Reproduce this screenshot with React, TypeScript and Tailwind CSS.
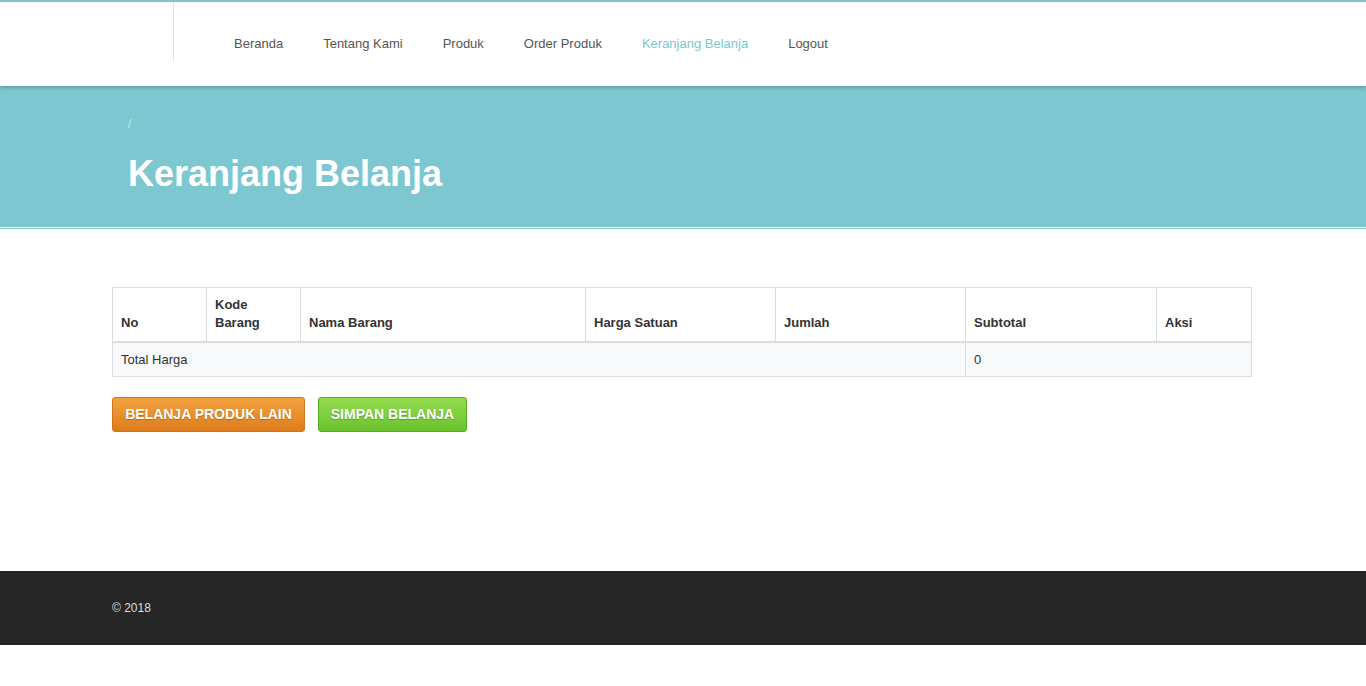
export default function App() {
  const nav = ["Beranda", "Tentang Kami", "Produk", "Order Produk", "Keranjang Belanja", "Logout"];
  const cols = [
    { label: "No", w: "w-[94px]" },
    { label: "Kode Barang", w: "w-[94px]" },
    { label: "Nama Barang", w: "w-[285px]" },
    { label: "Harga Satuan", w: "w-[190px]" },
    { label: "Jumlah", w: "w-[190px]" },
    { label: "Subtotal", w: "w-[191px]" },
    { label: "Aksi", w: "w-[95px]" },
  ];

  return (
    <div className="min-h-[686px] bg-white font-['Liberation_Sans',Arial,sans-serif] text-[#333]">
      {/* header */}
      <header className="relative z-10 h-[86px] border-t-2 border-[#7cc7d0] bg-white shadow-[0_2px_4px_rgba(0,0,0,0.2)]">
        <div className="flex h-full">
          <div className="w-[174px] shrink-0">
            <div className="ml-auto h-[59px] w-px bg-[#e2e2e2]"></div>
          </div>
          <nav className="ml-[40px] flex h-[82px] items-center pt-[2px]">
            {nav.map((item) => (
              <a
                key={item}
                href="#"
                className={
                  "px-[20px] text-[13px] " +
                  (item === "Keranjang Belanja" ? "text-[#7cc7d0]" : "text-[#555]")
                }
              >
                {item}
              </a>
            ))}
          </nav>
        </div>
      </header>

      {/* page title */}
      <section className="h-[141px] bg-[#7cc7d0]">
        <div className="ml-[112px] w-[1140px] pl-[16px] pr-[15px] pt-[30px]">
          <div className="h-[16px] text-[12px] leading-[16px] text-[#c8eaee]">/</div>
          <h1 className="mt-[22px] text-[36px] font-bold leading-[40px] text-white">Keranjang Belanja</h1>
        </div>
      </section>
      <div className="mt-px h-px bg-[#7cc7d0]"></div>

      {/* content */}
      <main className="ml-[112px] w-[1140px] pt-[58px] pb-[139px]">
        <table className="w-full border-collapse border border-[#ddd] text-[13px]">
          <thead>
            <tr className="h-[54px]">
              {cols.map((c) => (
                <th
                  key={c.label}
                  className={
                    c.w +
                    " border border-b-2 border-[#ddd] px-[8px] pb-[9px] text-left align-bottom text-[13px] font-bold leading-[18px] text-[#333]"
                  }
                >
                  {c.label === "Kode Barang" ? (
                    <>
                      Kode
                      <br />
                      Barang
                    </>
                  ) : (
                    c.label
                  )}
                </th>
              ))}
            </tr>
          </thead>
          <tbody>
            <tr className="h-[35px] bg-[#f7f9fa]">
              <td colSpan={5} className="border border-[#ddd] px-[8px] text-[13px] text-[#333]">
                Total Harga
              </td>
              <td colSpan={2} className="border border-[#ddd] px-[8px] text-[13px] text-[#333]">
                0
              </td>
            </tr>
          </tbody>
        </table>

        <div className="mt-[20px] flex gap-[13px]">
          <button className="h-[35px] w-[193px] rounded-[3px] border border-[#d0761a] bg-gradient-to-b from-[#f2a23f] to-[#df7c1a] text-[14px] font-bold uppercase text-white [text-shadow:0_1px_1px_rgba(0,0,0,0.25)]">
            Belanja Produk Lain
          </button>
          <button className="h-[35px] w-[149px] rounded-[3px] border border-[#53ad1e] bg-gradient-to-b from-[#93db4f] to-[#6ac22b] text-[14px] font-bold uppercase text-white [text-shadow:0_1px_1px_rgba(0,0,0,0.25)]">
            Simpan Belanja
          </button>
        </div>
      </main>

      {/* footer */}
      <footer className="h-[74px] bg-[#262626]">
        <div className="ml-[112px] flex h-full w-[1140px] items-center">
          <p className="text-[12px] text-[#ddd]">© 2018</p>
        </div>
      </footer>
    </div>
  );
}
